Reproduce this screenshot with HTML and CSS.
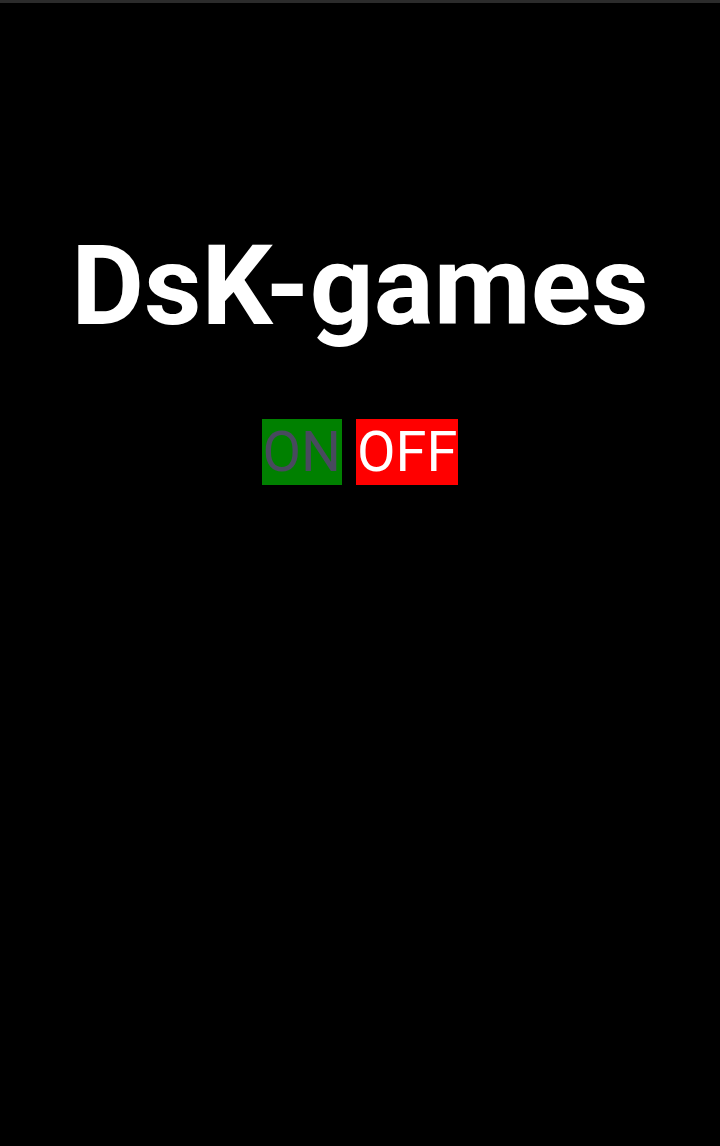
FILE: index.html
```html
<!DOCTYPE html>
<html>
<head>
<meta charset="utf-8">
<link rel="stylesheet" href="styles.css">
</head>
<body>
<div class="statusbar"></div>
<main class="screen">
  <h1 class="title">DsK-games</h1>
  <div class="toggles">
    <span class="btn btn-on">ON</span>
    <span class="btn btn-off">OFF</span>
  </div>
</main>
</body>
</html>
```

FILE: styles.css
```css
html, body {
  margin: 0;
  padding: 0;
  background: #000;
  height: 100%;
}
body {
  font-family: Roboto, "Liberation Sans", sans-serif;
}
.statusbar {
  height: 3px;
  background: #2b2b2b;
}
.screen {
  display: flex;
  flex-direction: column;
  align-items: center;
}
.title {
  margin: 216px 0 0 0;
  font-size: 112px;
  font-weight: 700;
  color: #fff;
  line-height: 134px;
}
.toggles {
  margin-top: 66px;
  display: flex;
  gap: 14px;
}
.btn {
  font-size: 56px;
  line-height: 66px;
  height: 66px;
  padding: 0 1px;
}
.btn-on {
  background: #008000;
  color: #484a5e;
}
.btn-off {
  background: #ff0000;
  color: #fff;
}
```
